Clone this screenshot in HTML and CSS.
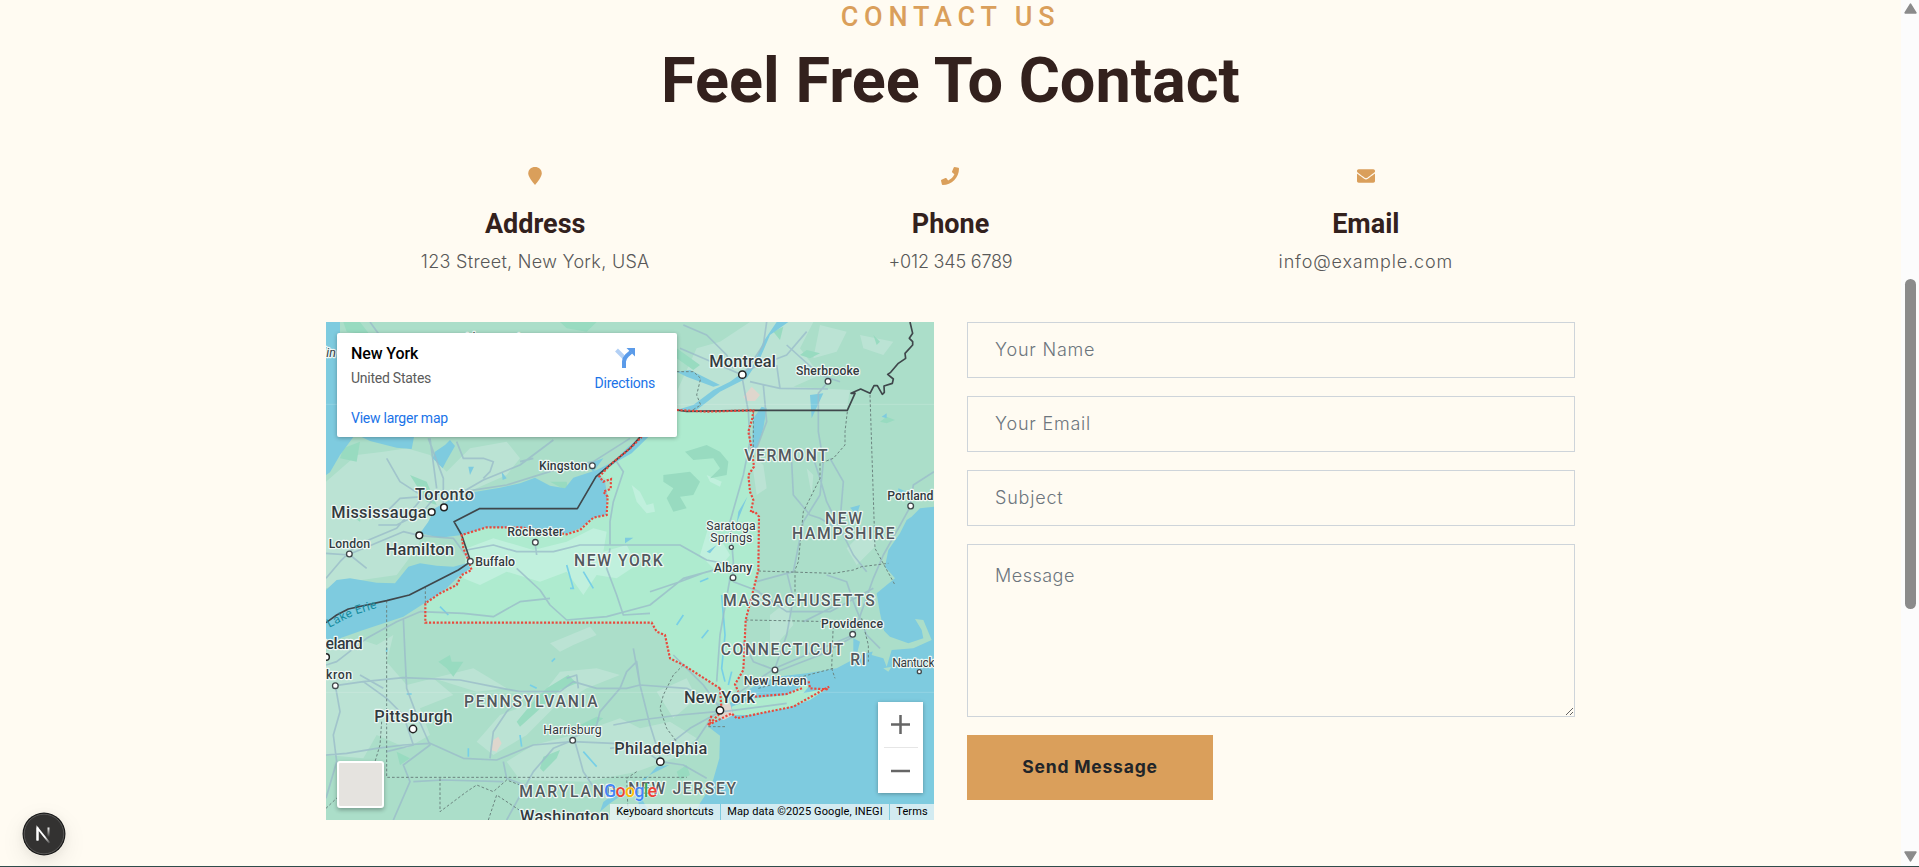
FILE: index.html
```html
<!DOCTYPE html>
<html lang="en">
<head>
<meta charset="utf-8">
<title>Contact Us</title>
<link rel="stylesheet" href="styles.css">
</head>
<body>
<main class="contact">
  <header class="heading">
    <h4 class="eyebrow">CONTACT US</h4>
    <h1 class="title">Feel Free To Contact</h1>
  </header>

  <section class="details">
    <div class="detail">
      <svg class="detail-icon" viewBox="0 0 512 512"><path d="M256 0C145 0 64 76 64 185c0 92 125 250 192 327 67-77 192-235 192-327C448 76 367 0 256 0z"/></svg>
      <h4>Address</h4>
      <p class="addr">123 Street, New York, USA</p>
    </div>
    <div class="detail">
      <svg class="detail-icon" viewBox="0 0 512 512"><path d="M493.400 24.600l-104-24c-11.300-2.600-22.900 3.300-27.500 13.900l-48 112c-4.200 9.800-1.400 21.300 6.900 28l60.600 49.600c-36 76.700-98.900 140.500-177.200 177.200l-49.600-60.600c-6.800-8.300-18.200-11.100-28-6.900l-112 48C3.900 366.500-2 378.100.6 389.400l24 104C27.100 504.200 36.700 512 48 512c256.100 0 464-207.500 464-464 0-11.200-7.700-20.900-18.600-23.400z"/></svg>
      <h4>Phone</h4>
      <p class="phone">+012 345 6789</p>
    </div>
    <div class="detail">
      <svg class="detail-icon" viewBox="0 0 512 512"><path d="M502.300 190.800c3.900-3.100 9.700-.2 9.700 4.700V400c0 26.500-21.500 48-48 48H48c-26.500 0-48-21.500-48-48V195.600c0-5 5.700-7.800 9.700-4.700 22.400 17.400 52.100 39.500 154.100 113.600 21.100 15.400 56.700 47.800 92.200 47.600 35.700.3 72-32.800 92.300-47.600 102-74.100 131.600-96.300 154-113.700zM256 320c23.200.4 56.600-29.200 73.400-41.400 132.700-96.300 142.800-104.700 173.400-128.700 5.800-4.500 9.200-11.500 9.200-18.900v-19c0-26.500-21.500-48-48-48H48c-26.500 0-48 21.500-48 48v19c0 7.400 3.400 14.300 9.200 18.900 30.600 23.900 40.700 32.400 173.400 128.700 16.800 12.200 50.200 41.800 73.400 41.400z"/></svg>
      <h4>Email</h4>
      <p class="mail">info@example.com</p>
    </div>
  </section>

  <section class="columns">
    <div class="map">
      <svg class="map-canvas" viewBox="18 21 1824 1494">
        <rect class="land" x="18" y="21" width="1824" height="1494"/>
        <!-- farmland -->
        <g class="pale">
          <path d="M18 500L110 420 190 410 260 400 330 420 380 470 450 400 560 380 600 430 560 480 470 520 380 560 330 610 290 700 230 780 90 800 18 820z"/>
          <path d="M1070 230L1130 100 1200 80 1290 21 1480 21 1440 100 1500 180 1420 215 1590 225 1580 285 1070 285z"/>
          <path d="M1500 30L1580 50 1550 110 1480 130zM1620 60L1720 80 1690 120 1630 100z"/>
          <path d="M18 1010L110 970 170 990 220 960 200 1040 260 1110 340 1090 400 1140 300 1180 330 1260 260 1300 170 1260 130 1330 18 1320z"/>
          <path d="M690 985L810 935 830 960 760 990 720 1010zM340 1090L460 1060 560 1120 470 1130zM560 1340L640 1290 760 1260 900 1210 960 1240 1050 1220 1130 1270 1060 1330 950 1370 800 1400 600 1395z"/>
          <path d="M470 1280L540 1200 650 1160 720 1070 830 1060 900 1080 800 1120 700 1180 620 1260 520 1320zM1010 1130L1100 1090 1130 1150 1060 1210z"/>
          <path d="M1280 410L1330 450 1340 520 1310 540 1300 470zM1460 460L1480 480 1475 540zM1580 700L1640 640 1670 690 1610 750zM1350 900L1400 860 1420 930 1350 1010z"/>
        </g>
        <path class="state" d="M1070 285H1300L1297 310 1288 350 1295 400 1300 455 1285 480 1290 530 1298 560 1292 590 1315 605 1315 765 1300 825 1277 915 1270 1065 1245 1110 1240 1150 1215 1190 1200 1120 1090 1050 1050 1030 1035 960 1010 950 995 923H316V865L360 835 410 810 425 780 455 765 440 735 425 660 500 637 650 640 740 658 780 640 820 610 860 600 860 540 870 500 840 480 890 430 930 400 990 340 1040 290z"/>
        <g class="state-pale">
          <path d="M440 700L520 670 640 705 740 680 820 640 860 650 850 710 920 690 950 750 890 790 830 780 790 840 740 770 660 800 560 770 480 810 430 790z"/>
          <path d="M935 510L960 530 980 570 1000 565 1005 590 980 595 950 560zM1160 480L1205 500 1200 515 1170 500z"/>
          <path d="M1170 620L1230 720 1190 770 1140 720z"/>
        </g>
        <g class="forest">
          <path d="M1095 410L1160 390 1200 410 1225 440 1220 480 1170 490 1200 460 1180 430 1120 435zM1030 480L1110 470 1140 500 1120 540 1080 545 1100 580 1060 590 1040 550 1060 520 1030 500z"/>
          <path d="M355 1040L390 1020 395 1040 430 1040 400 1085 380 1060zM680 1120L745 1080 770 1105 720 1125 650 1190 600 1235 590 1220 640 1160zM660 1360L670 1325 720 1305 710 1330 670 1370z"/>
          <path d="M1440 120L1460 105 1500 115 1470 130zM1070 100L1140 150 1120 165 1070 130zM1360 50L1390 35 1380 75zM1660 60L1680 80 1670 90zM1680 320L1700 305 1725 315 1700 325zM1070 1370L1100 1350 1110 1380 1080 1395zM780 1230L830 1205 850 1210 810 1240z"/>
          <path d="M70 400L120 380 110 440 60 430zM270 480L320 500 350 570 320 560zM90 600L130 580 120 620zM230 1310L270 1330 240 1350z"/>
          <path d="M18 235L60 240 60 280 18 265zM690 500L740 500 745 530z"/>
          <path d="M70 21L120 21 150 60 80 50zM720 21L830 21 800 50 740 40z"/>
        </g>
        <!-- water -->
        <g class="water">
          <path d="M300 655L325 620 345 580 395 552 440 535 540 518 600 505 645 488 690 512 735 520 760 488 830 465 880 440 925 395 960 366H985L935 415 890 440 835 480 855 500 862 540 858 600 820 608 780 640 740 656 650 640 500 637 425 660 360 668z"/>
          <path d="M18 825L50 795 90 790 170 803 225 805 265 755 300 745 350 752 400 755 440 745 452 760 415 785 380 820 320 860 250 905 130 945 18 985z"/>
          <path d="M18 60H60V366H100L60 420 30 472 18 480zM125 366H282L275 402 230 398 150 378zM345 410L375 390 390 375 405 393 378 440 368 460 338 430z"/>
          <path d="M820 440L850 430 820 470 800 450zM545 470L560 490 548 495zM445 455H462L450 480zM18 21H60V60H18z"/>
          <path d="M1070 285L1120 270 1180 225 1230 200 1300 150 1330 80 1370 21H1405L1350 60 1320 130 1280 190 1200 230 1130 285z"/>
          <path d="M1070 170L1110 165 1200 210 1180 215 1100 185zM1300 310L1325 275 1340 280 1330 340 1310 400 1295 420z"/>
          <path d="M1282 545L1250 625 1255 590zM1160 710L1190 690 1170 715zM1470 240L1510 235 1475 310zM1590 578L1620 570 1610 600zM1685 305L1700 295 1700 310zM915 668H940L915 685zM1735 520L1760 530 1755 550 1735 545zM850 1461L890 1431 920 1431 870 1465 840 1490z"/>
          <path d="M1842 575L1800 580 1775 605 1760 615 1740 655 1705 705 1695 755 1725 790 1670 835 1680 895 1695 960 1680 1005 1635 1015 1550 1060 1460 1075 1370 1085 1300 1115 1240 1150 1200 1210 1165 1235 1200 1262 1198 1330 1175 1410 1140 1465 1110 1515H1842z"/>
          <path d="M1048 1350L1010 1355 970 1400 960 1430 970 1460 1000 1510 960 1490 950 1430 970 1390zM1600 970L1620 980 1610 1020 1600 1010z"/>
        </g>
        <!-- cape and islands -->
        <path class="land" d="M1680 935L1710 965 1765 985 1810 970 1805 945 1785 912 1810 915 1835 975 1780 1000 1715 1005 1700 1055 1690 1030 1655 1020z"/>
        <path class="land" d="M1690 1060L1715 1055 1705 1070z"/>
        <path class="state" d="M1235 1175L1300 1150 1400 1140 1450 1110 1470 1110 1450 1135 1525 1118 1470 1155 1400 1180 1290 1200 1240 1200z"/>
        <path class="city" d="M1205 1170L1230 1165 1240 1200 1210 1215 1190 1200zM520 1275L535 1265 545 1285 530 1310 512 1305zM1270 245L1295 215 1320 240 1305 258H1280z"/>
        <path class="stream" d="M740 750L760 820 750 820M790 770L820 820M360 875L385 900M1165 790L1140 800M1205 840L1215 960 1205 1060 1215 1100M1235 1070L1225 1110M1165 945L1145 970M1090 900L1070 930M790 1310L830 1355M600 1260L605 1295M445 1300V1325M695 1040L705 1030M260 1137H275M200 1000V1010M630 1110L650 1120"/>
        <!-- roads -->
        <g class="road">
          <path d="M18 790L60 740 110 690 230 640 310 545M90 717L250 650 300 662 400 670 452 740M18 715L90 720 140 760M370 570V490L325 370M395 550L490 495 600 450 700 375M300 600L350 540 430 530 560 510 720 460 820 440 930 370M330 370L350 520M410 380L430 430 490 430 520 440 510 470 490 490M310 545L240 550 200 590M175 630L230 630 290 600M200 430L240 500 310 545M150 21L200 90M600 440L640 430"/>
          <path d="M440 705L520 690 590 710 700 710 780 690 870 690 1000 690 1080 690 1160 735 1235 750M646 690L650 720M870 690L870 620 880 560 910 470 890 440M870 700L860 760 890 840 910 900 990 895M590 760L660 825 690 870 740 915 860 905 990 870 1090 790 1200 760M300 890L430 895 520 905 600 860 690 850M990 830L1080 800 1160 770M1230 790L1200 960 1190 1100M1238 790L1240 740 1230 620 1270 480 1290 380 1285 290"/>
          <path d="M1267 190L1285 290M1267 180L1150 130 1080 100M1290 200L1380 220 1524 222M1330 210L1340 320 1310 400M1524 200L1495 235 1495 350 1510 440 1500 540 1450 620 1420 770 1310 800M1480 430L1500 490 1520 560 1560 640 1600 720 1640 770M1415 440L1420 540 1470 600 1500 610 1550 640M1530 430L1570 500 1560 620M1772 573L1735 640 1690 720 1660 790 1600 960 1365 1060 1230 1150M1842 470L1780 510 1770 575M1270 180L1330 90 1340 21M1267 170L1400 120 1460 50M1240 160L1220 120 1160 60 1090 30M1380 220L1370 150M1400 90L1500 180 1560 200"/>
          <path d="M1300 820L1400 890 1530 890 1660 820M1400 770L1420 850 1400 960 1365 1060M1520 780L1580 800 1600 860 1640 960 1680 1000M1450 920L1550 870M1240 800L1320 830"/>
          <path d="M18 1320L80 1315 170 1300 250 1290 330 1285 430 1330 530 1335 640 1290 758 1280 880 1285 1020 1310 1110 1240 1200 1190M46 1112L130 1100 200 1150M120 1080L190 1120M46 1112L60 1190 40 1260 50 1340 18 1450M18 1050L50 1040 140 970 230 920 300 890M250 910L255 1020 260 1120 290 1200 330 1290 250 1350 270 1400 220 1515M130 1100L250 1088 420 1095 520 1115 600 1130 720 1130 760 1100 830 1120 920 1120 960 1110 1100 1120 1200 1170"/>
          <path d="M200 1150L250 1200 280 1290 200 1310M510 1330L520 1250 560 1190 590 1160M758 1276L700 1300 640 1370 560 1515M765 1280L790 1370 830 1430M758 1270L830 1230 840 1190 900 1120 920 1070 950 1040 960 1110M550 1340L560 1390 640 1420M280 1400L370 1395 550 1400M1021 1340L950 1290 870 1300M1021 1330L990 1230 960 1110 940 1000M1021 1340L1090 1350 1160 1390M1040 1320L1120 1290 1180 1200M880 1230L960 1215 1080 1200 1190 1190M740 1090L770 1080 775 1120M1200 1180L1150 1110 1060 1020"/>
          <path d="M1210 1190L1400 1165M1370 1070L1500 1020 1600 965M1365 1065L1300 1040 1270 980"/>
        </g>
        <path class="graticule" d="M18 268H1842M18 1132H1842"/>
        <!-- state lines -->
        <path class="county" d="M316 865V815M200 857V1387H1100M360 1390V1490L440 1430 470 1410 520 1430 560 1395 600 1410M505 1515L530 1440 620 1500M185 1220L180 1290 165 1340M18 1480L60 1440M1070 170L1120 170 1142 190 1130 240 1142 270 1110 290M1582 290L1575 350 1575 390 1540 430 1500 445 1500 490 1450 590 1435 740 1425 765V830M1650 240L1665 700 1725 810M1315 768L1540 775 1600 765 1625 755 1705 745M1277 915L1390 917 1535 920 1610 917M1540 920L1535 1060 1545 1090M1625 910L1645 990V1040M1090 1050L1060 1080 1030 1140 1020 1180 1040 1240 1070 1280M950 1370L920 1390 925 1515M1315 1120L1540 1060M1165 1235H1215M1300 290V400"/>
        <path class="border" d="M18 923L50 900 85 882 200 857 268 840 415 765 452 740 425 660 402 620 478 581H772L828 485 870 450 930 400 960 366 1030 300 1070 285 1100 289 1300 286H1582L1605 235 1593 235 1622 222 1650 235 1662 212 1672 212 1687 238 1693 232 1692 213 1717 205 1720 192 1703 178 1712 172 1735 145 1757 130 1755 115 1778 90V80L1768 70 1778 55 1770 21"/>
        <path class="ny-line" d="M1070 285L1160 290 1300 286 1297 310 1285 350 1295 400 1302 455 1285 480 1290 530 1300 555 1292 592 1305 590 1317 605 1315 765 1300 825 1277 915 1270 1065 1245 1108 1255 1130M1200 1120L1090 1050 1050 1030 1035 960 1010 950 995 923H316V865L360 835 410 810 425 780 455 765 443 730 430 700 425 660 500 637 600 637 740 658 780 645 820 608 860 600 863 545 850 530 872 522 873 492 850 500 838 485 870 450 930 400 965 366M1200 1120L1205 1190 1165 1230 1175 1200M1165 1230L1235 1195 1250 1210 1320 1195 1420 1175 1500 1130 1527 1115 1520 1123 1470 1120 1465 1095M1305 1145L1400 1137 1450 1118"/>
        <!-- labels -->
        <g class="label big">
          <text x="285" y="555" textLength="177">Toronto</text><text x="34" y="610" textLength="286">Mississauga</text><text x="197" y="720" textLength="205">Hamilton</text>
          <text x="1168" y="157" textLength="200">Montreal</text><text x="1092" y="1164" textLength="213">New York</text><text x="163" y="1220" textLength="235">Pittsburgh</text>
          <text x="883" y="1316" textLength="279">Philadelphia</text><text x="600" y="1522" textLength="267">Washington</text><text x="-70" y="1003" textLength="198">Cleveland</text>
        </g>
        <g class="label">
          <text x="657" y="466" textLength="146">Kingston</text><text x="26" y="699" textLength="124">London</text><text x="562" y="664" textLength="168">Rochester</text><text x="466" y="753" textLength="119">Buffalo</text>
          <text x="1428" y="181" textLength="190">Sherbrooke</text><text x="1702" y="556" textLength="138">Portland</text><text x="1181" y="770" textLength="116">Albany</text>
          <text x="1503" y="939" textLength="186">Providence</text><text x="1271" y="1110" textLength="189">New Haven</text><text x="-8" y="1092" textLength="104">Akron</text>
        </g>
        <g class="label light">
          <text x="1159" y="645" textLength="148">Saratoga</text><text x="1171" y="682" textLength="126">Springs</text><text x="1717" y="1056" textLength="155">Nantucket</text><text x="670" y="1257" textLength="175">Harrisburg</text>
          <text x="430" y="80" textLength="195">Algonquin</text>
        </g>
        <text class="label italic" x="10" y="125">lin</text>
        <g class="label region">
          <text x="1273" y="438" textLength="250">VERMONT</text><text x="1515" y="627" textLength="111">NEW</text><text x="1416" y="673" textLength="308">HAMPSHIRE</text><text x="762" y="753" textLength="266">NEW YORK</text>
          <text x="1209" y="872" textLength="455">MASSACHUSETTS</text><text x="1202" y="1020" textLength="368">CONNECTICUT</text><text x="1591" y="1050" textLength="47">RI</text><text x="432" y="1176" textLength="401">PENNSYLVANIA</text>
          <text x="598" y="1447" textLength="290">MARYLAND</text><text x="925" y="1437" textLength="323">NEW JERSEY</text>
        </g>
        <text class="lake" transform="translate(28 938) rotate(-27)">Lake</text>
        <text class="lake" transform="translate(109 898) rotate(-17)">Erie</text>
        <g class="dot">
          <circle cx="372" cy="577" r="10"/><circle cx="335" cy="591" r="10"/><circle cx="298" cy="661" r="10"/><circle cx="1267" cy="179" r="11"/><circle cx="1200" cy="1186" r="11"/><circle cx="1021" cy="1340" r="11"/><circle cx="279" cy="1242" r="11"/><circle cx="18" cy="1026" r="10"/>
        </g>
        <g class="dot small">
          <circle cx="88" cy="717" r="8.500"/><circle cx="817" cy="452" r="8.500"/><circle cx="646" cy="682" r="8.500"/><circle cx="451" cy="739" r="8.500"/><circle cx="1524" cy="199" r="8.500"/><circle cx="1772" cy="573" r="8.500"/><circle cx="1239" cy="788" r="8.500"/><circle cx="1598" cy="958" r="8.500"/><circle cx="1365" cy="1065" r="8.500"/><circle cx="758" cy="1276" r="8.500"/><circle cx="46" cy="1112" r="8.500"/><circle cx="1234" cy="697" r="6"/><circle cx="1798" cy="1070" r="6"/>
        </g>
      </svg>
      <div class="place">
        <div class="place-text">
          <strong>New York</strong>
          <span>United States</span>
          <a>View larger map</a>
        </div>
        <a class="directions">
          <svg viewBox="0 0 20 20"><path class="branch" d="M1.500 2L9 9.500"/><path class="arrow" d="M9 20v-6.500c0-3 1-4 3-6L16 4"/><path class="tip" d="M11.500 0H20v8.500z"/></svg>
          Directions
        </a>
      </div>
      <div class="layer"></div>
      <div class="zoom">
        <svg viewBox="0 0 45 45"><path d="M13 22.500h19M22.500 13v19"/></svg>
        <i></i>
        <svg viewBox="0 0 45 45"><path d="M13 23h19"/></svg>
      </div>
      <div class="google"><b class="g1">G</b><b class="g2">o</b><b class="g3">o</b><b class="g1">g</b><b class="g4">l</b><b class="g2">e</b></div>
      <div class="legal"><span class="keys">Keyboard shortcuts</span><span class="data">Map data ©2025 Google, INEGI</span><span class="terms">Terms</span></div>
    </div>

    <form class="form">
      <input class="field name" type="text" placeholder="Your Name">
      <input class="field" type="email" placeholder="Your Email">
      <input class="field" type="text" placeholder="Subject">
      <textarea class="field message" placeholder="Message"></textarea>
      <button class="send" type="button">Send Message</button>
    </form>
  </section>
</main>

<aside class="scrollbar">
  <svg viewBox="0 0 12 10"><path d="M6 1L11 9H1z"/></svg>
  <div class="track"><div class="thumb"></div></div>
  <svg viewBox="0 0 12 10"><path d="M1 1H11L6 9z"/></svg>
</aside>

<div class="dev-badge">
  <svg viewBox="0 0 44 44">
    <defs>
      <linearGradient id="fadeDiag" x1="24" y1="24" x2="29" y2="31" gradientUnits="userSpaceOnUse"><stop stop-color="#fff"/><stop offset="1" stop-color="#fff" stop-opacity="0"/></linearGradient>
      <linearGradient id="fadeStem" x1="0" y1="15" x2="0" y2="25" gradientUnits="userSpaceOnUse"><stop stop-color="#fff"/><stop offset="1" stop-color="#fff" stop-opacity="0"/></linearGradient>
    </defs>
    <circle cx="22" cy="22" r="21.500" fill="#1a1a1a"/>
    <circle cx="22" cy="22" r="19.800" fill="#333231" stroke="#5a5958" stroke-width="1"/>
    <path d="M15.500 28.500V16L27.500 31" fill="none" stroke="url(#fadeDiag)" stroke-width="2"/>
    <path d="M15.500 28.500V15.500" stroke="#fff" stroke-width="2"/>
    <path d="M26.500 15.500v10" stroke="url(#fadeStem)" stroke-width="2"/>
  </svg>
</div>
</body>
</html>
```
FILE: styles.css
```css
* { box-sizing: border-box; }
body {
  margin: 0;
  height: 867px;
  display: flex;
  overflow: hidden;
  background: #fffbf2;
  border-bottom: 1px solid #304c4b;
  font-family: Inter, "Liberation Sans", sans-serif;
}
h1, h4, p { margin: 0; }

.contact { flex: 1; display: flex; flex-direction: column; align-items: center; }
.heading { padding-top: 1px; text-align: center; font-family: Roboto, sans-serif; }
.eyebrow { font-size: 27px; line-height: 32px; font-weight: 500; letter-spacing: 5.800px; color: #da9f5b; }
.title { margin-top: 10px; font-size: 63px; line-height: 76px; font-weight: 700; color: #33211d; }

.details { width: 1246px; margin-top: 48px; display: grid; grid-template-columns: repeat(3, 1fr); }
.detail { display: flex; flex-direction: column; align-items: center; }
.detail-icon { width: 18px; height: 18px; fill: #da9f5b; }
.detail h4 { margin-top: 23px; font: 700 27px/32px Roboto, sans-serif; color: #33211d; }
.detail p { margin-top: 8px; font-size: 18px; line-height: 27px; font-weight: 300; color: #585858; }
.detail .addr { letter-spacing: .3px; }
.detail .phone { letter-spacing: -.2px; }
.detail .mail { letter-spacing: .85px; }

.columns { width: 1249px; margin-top: 47px; display: grid; grid-template-columns: 608px 608px; gap: 33px; }

.map { position: relative; height: 498px; overflow: hidden; font-family: Roboto, sans-serif; }
.map-canvas { display: block; width: 608px; height: 498px; }
.land { fill: #abdec9; }
.pale { fill: #bbe3d4; }
.state { fill: #aeebcf; }
.state-pale { fill: #c0f0dd; }
.forest { fill: #98dbc0; }
.water { fill: #7ecbdf; }
.city { fill: #dfd6cd; }
.stream { fill: none; stroke: #77cfe6; stroke-width: 5; }
.road { fill: none; stroke: #9bbdca; stroke-width: 5; stroke-linejoin: round; opacity: .8; }
.graticule { stroke: #fff; stroke-opacity: .25; stroke-width: 2; }
.county { fill: none; stroke: #6c8580; stroke-width: 3; stroke-dasharray: 8 6; }
.border { fill: none; stroke: #3f474b; stroke-width: 5; stroke-linejoin: round; }
.ny-line { fill: none; stroke: #e8493d; stroke-width: 6.500; stroke-dasharray: 6.500 5; }
.label { fill: #333a3f; stroke: #eef8f4; stroke-width: 7; paint-order: stroke; stroke-linejoin: round; font-size: 37px; font-weight: 500; }
.big { font-size: 49px; }
.light { font-weight: 400; }
.italic { font-style: italic; font-weight: 400; }
.region { font-size: 47px; fill: #53595e; }
.lake { font-size: 36px; fill: #168ba0; letter-spacing: 1.500px; }
.dot { fill: #fff; stroke: #222; stroke-width: 4.500; }
.small { stroke: #41494c; stroke-width: 4; }

.place {
  position: absolute; left: 11px; top: 11px; width: 340px; height: 104px;
  display: flex; justify-content: space-between; padding: 11px 22px 0 14px;
  background: #fff; border-radius: 2px; box-shadow: 0 1px 4px rgba(0, 0, 0, .3); font-size: 14px; letter-spacing: -.25px;
}
.place-text { display: flex; flex-direction: column; }
.place strong { font-size: 16px; line-height: 20px; font-weight: 500; color: #000; letter-spacing: -.1px; }
.place span { margin-top: 6px; line-height: 16px; color: #5b5b5b; }
.place a { color: #1a73e8; line-height: 16px; }
.place-text a { margin-top: 24px; }
.directions { display: flex; flex-direction: column; align-items: center; padding-top: 4px; }
.directions svg { width: 20px; height: 20px; margin-bottom: 7px; }
.directions path { fill: none; stroke: #5b9be9; stroke-width: 4; }
.directions .branch { stroke: #b3d0f5; }
.directions .tip { fill: #5b9be9; stroke: none; }
.layer { position: absolute; left: 11px; top: 439px; width: 47px; height: 47px; background: #e5e3df; border: 2px solid #fff; border-radius: 3px; box-shadow: 0 2px 4px rgba(0, 0, 0, .3); }
.zoom { position: absolute; right: 11px; top: 380px; width: 45px; height: 91px; background: #fff; box-shadow: 0 1px 4px rgba(0, 0, 0, .3); display: flex; flex-direction: column; align-items: center; }
.zoom svg { width: 45px; height: 45px; stroke: #666; stroke-width: 2.500; }
.zoom i { width: 34px; height: 1px; background: #e6e6e6; }
.google { position: absolute; left: 278px; top: 458px; font: 500 18px/22px Roboto, sans-serif; letter-spacing: -.8px; display: flex; text-shadow: 0 0 1px #fff, 0 0 2px #fff; }
.google b { font-weight: 500; }
.g1 { color: #4285f4; }
.g2 { color: #ea4335; }
.g3 { color: #fbbc05; }
.g4 { color: #34a853; }
.legal { position: absolute; right: 0; bottom: 0; height: 16px; display: flex; gap: 1px; font-size: 11px; line-height: 16px; letter-spacing: .12px; color: #000; white-space: nowrap; }
.legal span { background: rgba(240, 246, 247, .75); text-align: center; }
.keys { width: 110px; }
.data { width: 168px; }
.terms { width: 44px; }

.form { display: flex; flex-direction: column; align-items: flex-start; gap: 18px; }
.field {
  display: block; width: 608px; height: 56px; margin: 0; padding: 0 27px 2px;
  border: 1px solid #ced4da; border-radius: 0; outline: 0; background: transparent;
  font: 300 18px/27px Inter, sans-serif; letter-spacing: .8px;
}
.field::placeholder { color: #6c757d; opacity: 1; }
.message { height: 173px; padding-top: 17px; letter-spacing: .5px; resize: vertical; }
.send { width: 246px; height: 65px; padding: 0 0 2px; border: 0; background: #da9f5b; color: #212529; font: 700 17.500px/27px Inter, sans-serif; letter-spacing: .8px; }

.scrollbar { width: 18px; background: #fcfcfc; display: flex; flex-direction: column; align-items: center; padding: 3px 0 4px 1px; }
.scrollbar svg { width: 13px; height: 11px; fill: #8b8b8b; stroke: #8b8b8b; stroke-width: 1.500; stroke-linejoin: round; }
.track { flex: 1; padding-top: 265px; }
.thumb { width: 11px; height: 330px; border-radius: 6px; background: #8b8b8b; }

.dev-badge { position: absolute; left: 21.500px; top: 812px; width: 44px; height: 44px; border-radius: 50%; box-shadow: 0 8px 24px rgba(0, 0, 0, .08), 0 2px 10px rgba(0, 0, 0, .05); }
.dev-badge svg { display: block; }
```
